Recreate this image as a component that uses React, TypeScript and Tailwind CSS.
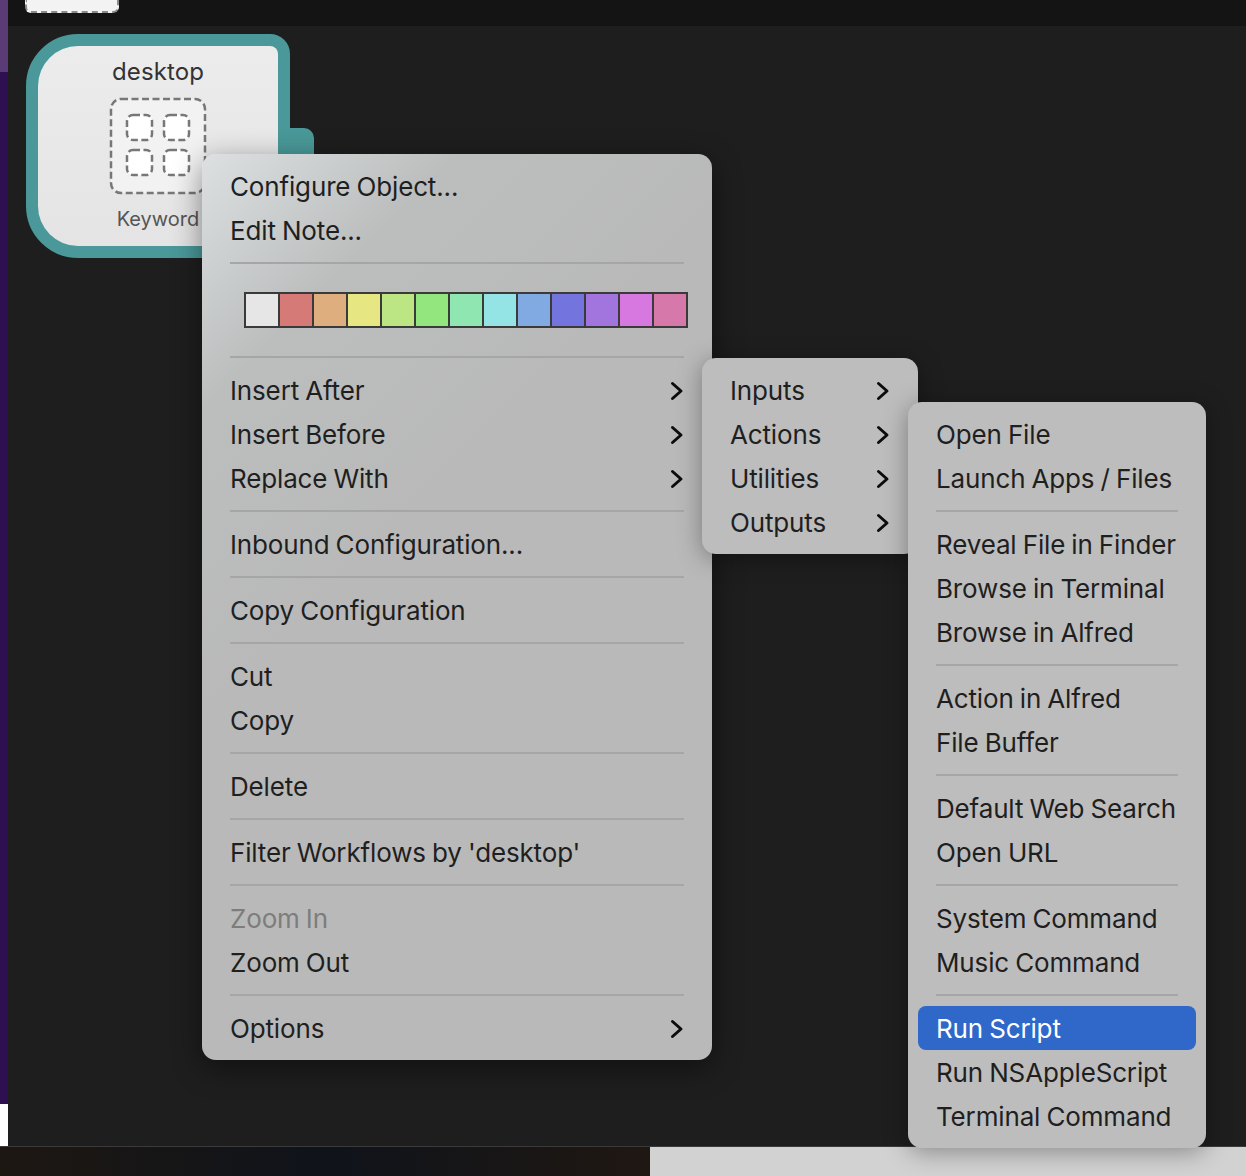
import React from 'react';

type Item = { label?: string; sep?: boolean; sub?: boolean; dim?: boolean; active?: boolean; swatches?: boolean };

const mainMenu: Item[] = [
  { label: 'Configure Object...' },
  { label: 'Edit Note...' },
  { sep: true },
  { swatches: true },
  { sep: true },
  { label: 'Insert After', sub: true },
  { label: 'Insert Before', sub: true },
  { label: 'Replace With', sub: true },
  { sep: true },
  { label: 'Inbound Configuration...' },
  { sep: true },
  { label: 'Copy Configuration' },
  { sep: true },
  { label: 'Cut' },
  { label: 'Copy' },
  { sep: true },
  { label: 'Delete' },
  { sep: true },
  { label: "Filter Workflows by 'desktop'" },
  { sep: true },
  { label: 'Zoom In', dim: true },
  { label: 'Zoom Out' },
  { sep: true },
  { label: 'Options', sub: true },
];

const insertMenu: Item[] = [
  { label: 'Inputs', sub: true },
  { label: 'Actions', sub: true },
  { label: 'Utilities', sub: true },
  { label: 'Outputs', sub: true },
];

const actionsMenu: Item[] = [
  { label: 'Open File' },
  { label: 'Launch Apps / Files' },
  { sep: true },
  { label: 'Reveal File in Finder' },
  { label: 'Browse in Terminal' },
  { label: 'Browse in Alfred' },
  { sep: true },
  { label: 'Action in Alfred' },
  { label: 'File Buffer' },
  { sep: true },
  { label: 'Default Web Search' },
  { label: 'Open URL' },
  { sep: true },
  { label: 'System Command' },
  { label: 'Music Command' },
  { sep: true },
  { label: 'Run Script', active: true },
  { label: 'Run NSAppleScript' },
  { label: 'Terminal Command' },
];

const swatchColors = [
  'bg-[#e6e6e6]', 'bg-[#d67a78]', 'bg-[#deae7e]', 'bg-[#e6e683]', 'bg-[#bbe683]', 'bg-[#93e67e]', 'bg-[#90e6b0]',
  'bg-[#94e4e6]', 'bg-[#82aae2]', 'bg-[#7474de]', 'bg-[#a274de]', 'bg-[#d678e0]', 'bg-[#d678aa]',
];

const Chevron = () => (
  <svg width="14" height="20" viewBox="0 0 14 20" fill="none" className="shrink-0">
    <path d="M2.5 2.5 L11 10 L2.5 17.5" stroke="#0c0c0c" strokeWidth="3" strokeLinecap="round" strokeLinejoin="round" />
  </svg>
);

const MenuRows: React.FC<{ items: Item[] }> = ({ items }) => (
  <>
    {items.map((item, i) => {
      if (item.sep) {
        return (
          <div key={i} className="h-[22px] flex items-center px-[18px]">
            <div className="w-full h-[2px] bg-[#a6a6a6]" />
          </div>
        );
      }
      if (item.swatches) {
        return (
          <div key={i} className="h-[72px] flex items-center pl-[32px]">
            <div className="flex gap-[2px] p-[2px] bg-[#3a3a3a]">
              {swatchColors.map((c) => (
                <div key={c} className={`w-[32px] h-[32px] ${c}`} />
              ))}
            </div>
          </div>
        );
      }
      return (
        <div
          key={i}
          className={`h-[44px] flex items-center justify-between pl-[18px] pr-[18px] pt-[1px] rounded-lg ${
            item.active ? 'bg-[#2f68c9] text-white' : item.dim ? 'text-[#7d7d7d]' : 'text-[#1f1f1f]'
          }`}
        >
          <span className="whitespace-nowrap tracking-[-0.15px] [word-spacing:-1px]">{item.label}</span>
          {item.sub && <Chevron />}
        </div>
      );
    })}
  </>
);

const DesktopNode = () => (
  <div className="absolute left-[18px] top-[8px] w-[288px] h-[224px]">
    <div className="absolute right-0 top-[94px] w-[40px] h-[60px] rounded-tr-[10px] bg-[#4a9899]" />
    <div className="absolute left-0 top-0 w-[264px] h-[224px] border-[12px] border-[#4a9899] rounded-tl-[52px] rounded-bl-[52px] rounded-tr-[20px] rounded-br-[20px] bg-[#4a9899]">
      <div className="w-full h-full rounded-tl-[40px] rounded-bl-[40px] rounded-tr-[8px] rounded-br-[8px] bg-gradient-to-b from-[#ececec] to-[#e4e4e4] flex flex-col items-center pt-[10px]">
        <div className="text-[24px] leading-[32px] text-[#333333] tracking-[0.1px]">desktop</div>
        <svg width="98" height="98" viewBox="0 0 98 98" fill="none" className="mt-[9px]">
          <rect x="2" y="2" width="94" height="94" rx="10" fill="#f2f2f2" stroke="#777777" strokeWidth="2.5" strokeDasharray="7 3.5" />
          <rect x="18" y="18" width="25" height="25" rx="6" fill="#ffffff" stroke="#777777" strokeWidth="2.5" strokeDasharray="7 3.5" />
          <rect x="55" y="18" width="25" height="25" rx="6" fill="#ffffff" stroke="#777777" strokeWidth="2.5" strokeDasharray="7 3.5" />
          <rect x="18" y="53" width="25" height="25" rx="6" fill="#ffffff" stroke="#777777" strokeWidth="2.5" strokeDasharray="7 3.5" />
          <rect x="55" y="53" width="25" height="25" rx="6" fill="#ffffff" stroke="#777777" strokeWidth="2.5" strokeDasharray="7 3.5" />
        </svg>
        <div className="text-[20px] leading-[26px] text-[#555555] mt-[11px]">Keyword</div>
      </div>
    </div>
  </div>
);

export default function App() {
  return (
    <div className="relative w-[1246px] h-[1176px] overflow-hidden flex flex-col bg-[#1e1e1e] font-['Inter',sans-serif]">
      <div className="flex flex-1 min-h-0">
        {/* window edge on the left */}
        <div className="w-[8px] shrink-0 flex flex-col">
          <div className="h-[72px] bg-[#5a3b75]" />
          <div className="flex-1 bg-[#2e0f52]" />
          <div className="h-[42px] bg-white" />
        </div>
        <div className="flex-1 flex flex-col min-w-0">
          <div className="h-[26px] bg-[#141414] pl-[17px]">
            <div className="w-[94px] h-[13px] rounded-b-[6px] bg-[#f3f3f3] border-2 border-t-0 border-dashed border-[#8a8a8a]" />
          </div>
          <div className="relative flex-1 bg-[#1e1e1e]">
            <DesktopNode />
          </div>
        </div>
      </div>
      <div className="h-[30px] shrink-0 flex border-t border-[#3a3a3a]">
        <div className="w-[650px] bg-gradient-to-r from-[#1d1712] via-[#0f131a] to-[#1f1712]" />
        <div className="flex-1 bg-[#d2d2d2]" />
      </div>

      <div className="absolute left-[202px] top-[154px] w-[510px] p-[10px] rounded-[14px] text-[26px] bg-[linear-gradient(135deg,#dce0e0_0%,#bcbebe_18%,#b9b9b9_40%)] shadow-[0_8px_30px_rgba(0,0,0,0.45)]">
        <MenuRows items={mainMenu} />
      </div>
      <div className="absolute left-[702px] top-[358px] w-[216px] p-[10px] rounded-[14px] text-[26px] bg-[#bdbdbd] shadow-[0_4px_24px_rgba(0,0,0,0.35)]">
        <MenuRows items={insertMenu} />
      </div>
      <div className="absolute left-[908px] top-[402px] w-[298px] p-[10px] rounded-[14px] text-[26px] bg-[#bdbdbd] shadow-[0_4px_24px_rgba(0,0,0,0.35)]">
        <MenuRows items={actionsMenu} />
      </div>
    </div>
  );
}
